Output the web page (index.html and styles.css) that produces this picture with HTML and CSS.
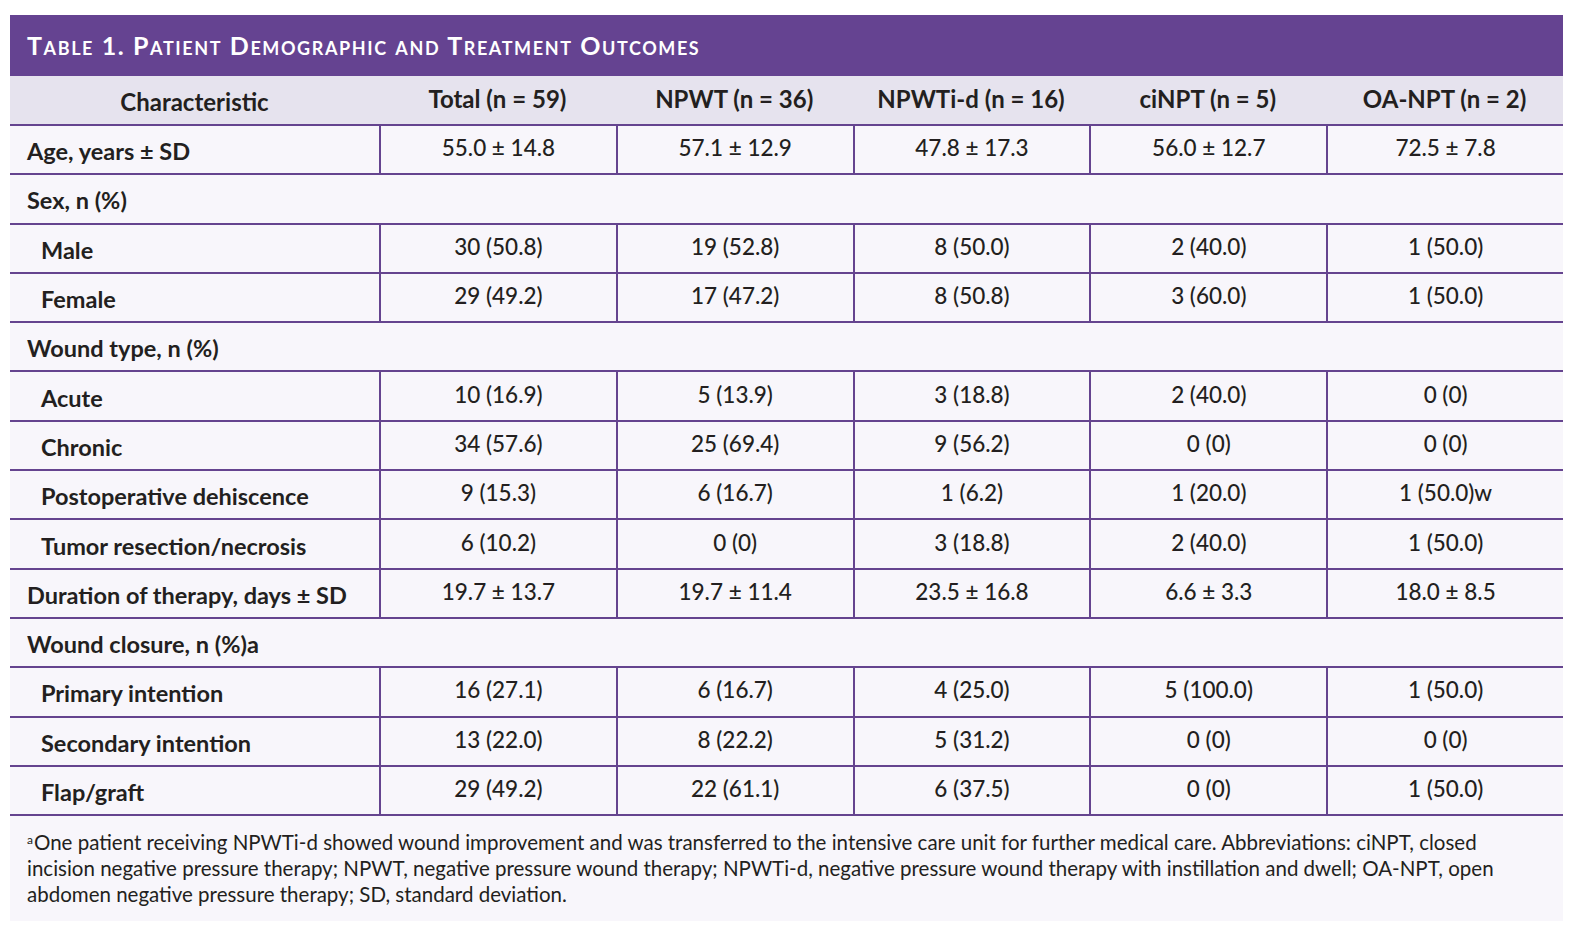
FILE: index.html
```html
<!DOCTYPE html>
<html lang="en">
<head>
<meta charset="utf-8">
<title>Table 1</title>
<link rel="stylesheet" href="styles.css">
</head>
<body>
<div class="panel">
  <div class="caption">Table 1. Patient Demographic and Treatment Outcomes</div>
  <table class="data">
    <thead>
      <tr>
        <th class="first">Characteristic</th>
        <th>Total (n = 59)</th>
        <th>NPWT (n = 36)</th>
        <th>NPWTi-d (n = 16)</th>
        <th>ciNPT (n = 5)</th>
        <th>OA-NPT (n = 2)</th>
      </tr>
    </thead>
    <tbody>
      <tr><td class="label">Age, years ± SD</td><td>55.0 ± 14.8</td><td>57.1 ± 12.9</td><td>47.8 ± 17.3</td><td>56.0 ± 12.7</td><td>72.5 ± 7.8</td></tr>
      <tr><td class="label group" colspan="6">Sex, n (%)</td></tr>
      <tr><td class="label sub">Male</td><td>30 (50.8)</td><td>19 (52.8)</td><td>8 (50.0)</td><td>2 (40.0)</td><td>1 (50.0)</td></tr>
      <tr><td class="label sub">Female</td><td>29 (49.2)</td><td>17 (47.2)</td><td>8 (50.8)</td><td>3 (60.0)</td><td>1 (50.0)</td></tr>
      <tr><td class="label group" colspan="6">Wound type, n (%)</td></tr>
      <tr><td class="label sub">Acute</td><td>10 (16.9)</td><td>5 (13.9)</td><td>3 (18.8)</td><td>2 (40.0)</td><td>0 (0)</td></tr>
      <tr><td class="label sub">Chronic</td><td>34 (57.6)</td><td>25 (69.4)</td><td>9 (56.2)</td><td>0 (0)</td><td>0 (0)</td></tr>
      <tr><td class="label sub">Postoperative dehiscence</td><td>9 (15.3)</td><td>6 (16.7)</td><td>1 (6.2)</td><td>1 (20.0)</td><td>1 (50.0)w</td></tr>
      <tr><td class="label sub">Tumor resection/necrosis</td><td>6 (10.2)</td><td>0 (0)</td><td>3 (18.8)</td><td>2 (40.0)</td><td>1 (50.0)</td></tr>
      <tr><td class="label">Duration of therapy, days ± SD</td><td>19.7 ± 13.7</td><td>19.7 ± 11.4</td><td>23.5 ± 16.8</td><td>6.6 ± 3.3</td><td>18.0 ± 8.5</td></tr>
      <tr><td class="label group" colspan="6">Wound closure, n (%)a</td></tr>
      <tr><td class="label sub">Primary intention</td><td>16 (27.1)</td><td>6 (16.7)</td><td>4 (25.0)</td><td>5 (100.0)</td><td>1 (50.0)</td></tr>
      <tr><td class="label sub">Secondary intention</td><td>13 (22.0)</td><td>8 (22.2)</td><td>5 (31.2)</td><td>0 (0)</td><td>0 (0)</td></tr>
      <tr><td class="label sub">Flap/graft</td><td>29 (49.2)</td><td>22 (61.1)</td><td>6 (37.5)</td><td>0 (0)</td><td>1 (50.0)</td></tr>
    </tbody>
  </table>
  <p class="note"><sup>a</sup>One patient receiving NPWTi-d showed wound improvement and was transferred to the intensive care unit for further medical care. Abbreviations: ciNPT, closed incision negative pressure therapy; NPWT, negative pressure wound therapy; NPWTi-d, negative pressure wound therapy with instillation and dwell; OA-NPT, open abdomen negative pressure therapy; SD, standard deviation.</p>
</div>
</body>
</html>
```
FILE: styles.css
```css
html, body {
  margin: 0;
  padding: 0;
  background: #ffffff;
}
body {
  padding: 15px 25px 0 10px;
  font-family: Lato, "Liberation Sans", sans-serif;
  color: #231f20;
}
.panel {
  width: 1553px;
  background: #f8f6fb;
}
.caption {
  height: 61px;
  box-sizing: border-box;
  background: #654391;
  color: #ffffff;
  font-weight: 700;
  font-size: 25px;
  font-variant: small-caps;
  letter-spacing: 1.6px;
  padding: 15px 0 0 17px;
}
.data {
  width: 100%;
  border-collapse: separate;
  border-spacing: 0;
  table-layout: fixed;
}
.data th, .data td {
  box-sizing: border-box;
  border-bottom: 2px solid #65448f;
  text-align: center;
  padding: 0;
  vertical-align: middle;
}
.data th {
  background: #e6e3ee;
  height: 50px;
  font-size: 24px;
  font-weight: 700;
  padding-bottom: 4px;
}
.data th.first {
  width: 369px;
  padding-top: 2px;
  padding-bottom: 0;
}
.data td {
  height: 49.3px;
  font-size: 22.5px;
  font-weight: 500;
  border-left: 2px solid #65448f;
  padding-bottom: 4px;
}
.data td.label {
  border-left: none;
  text-align: left;
  font-weight: 700;
  font-size: 23.5px;
  padding: 3px 0 0 17px;
}
.data td.sub {
  padding-left: 31px;
}
.note {
  margin: 0;
  padding: 13px 45px 14px 17px;
  font-size: 20.5px;
  line-height: 26px;
}
.note sup {
  font-size: 12px;
  vertical-align: 6px;
  line-height: 0;
  margin-right: 1px;
}
```
